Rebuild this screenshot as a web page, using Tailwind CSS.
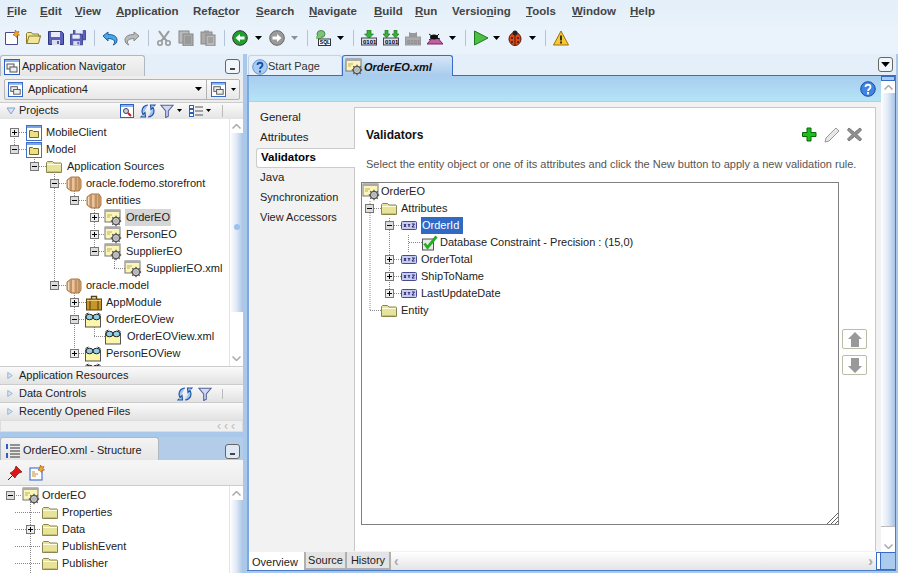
<!DOCTYPE html>
<html>
<head>
<meta charset="utf-8">
<script src="https://cdn.jsdelivr.net/npm/@tailwindcss/browser@4"></script>
<title>OrderEO.xml</title>
</head>
<body class="m-0 overflow-hidden">
<svg width="0" height="0" class="absolute">
  <defs>
    <symbol id="plus" viewBox="0 0 9 9"><rect x=".5" y=".5" width="8" height="8" fill="#eee" stroke="#777"/><path d="M2 4.500h5M4.500 2v5" stroke="#000"/></symbol>
    <symbol id="minus" viewBox="0 0 9 9"><rect x=".5" y=".5" width="8" height="8" fill="#ddd" stroke="#777"/><path d="M2 4.500h5" stroke="#000"/></symbol>
    <symbol id="folder" viewBox="0 0 16 16"><path d="M.5 13.500v-10l1-1h5l1.500 1.500h7l.5.5v9z" fill="#e8e39a" stroke="#8a8650"/><path d="M1 5.500h14" stroke="#fffde0"/><path d="M1.500 12.500h13" stroke="#c8c070"/></symbol>
    <symbol id="app" viewBox="0 0 16 16"><rect x=".5" y=".5" width="15" height="15" fill="#fff" stroke="#3f6fc6"/><rect x="1" y="1" width="14" height="2" fill="#7aa4e6"/><path d="M3.500 12.500v-7h3l1 1h5v6z" fill="#ecdf86" stroke="#6f6a2a"/></symbol>
    <symbol id="pkg" viewBox="0 0 16 16"><path d="M1 4l4-3h8l2 3v8l-2 3H5l-4-3z" fill="#dcae80" stroke="#a87848"/><path d="M5 2v13M10 1.500v13.500M13 2v13" stroke="#a87848"/><path d="M2.500 4v8M7 2v12" stroke="#f4dcc0"/></symbol>
    <symbol id="gear" viewBox="0 0 18 18"><rect x="1" y="1" width="15" height="12" fill="#fbf6b8" stroke="#777"/><path d="M1 1h15v2H1z" fill="#aaa"/><path d="M3 6h5M3 8h3" stroke="#bbb060"/><circle cx="12" cy="12" r="3.600" fill="#ccc" stroke="#555" stroke-width="1.300"/><circle cx="12" cy="12" r="1.200" fill="#fff" stroke="#666" stroke-width=".6"/><path d="M12 6.800v2M12 15.200v2M6.800 12h2M15.200 12h2M8.300 8.300l1.400 1.400M14.300 14.300l1.400 1.400M8.300 15.700l1.400-1.400M14.300 9.700l1.400-1.400" stroke="#555" stroke-width="1.300"/></symbol>
    <symbol id="view" viewBox="0 0 18 16"><rect x="1.500" y="4" width="15" height="11" fill="#fbf6a8" stroke="#555"/><path d="M1.500 2.500l3-1.500M16.500 2.500l-3-1.500" stroke="#333"/><ellipse cx="5.500" cy="5" rx="3.500" ry="2.800" fill="#8fd0e8" stroke="#222"/><ellipse cx="12.500" cy="5" rx="3.500" ry="2.800" fill="#8fd0e8" stroke="#222"/></symbol>
    <symbol id="brief" viewBox="0 0 16 16"><path d="M5.500 4V1.500h5V4" fill="none" stroke="#5a4310" stroke-width="1.400"/><rect x=".5" y="4" width="15" height="11" fill="#c6962a" stroke="#5a4310"/><path d="M4 4v11M12 4v11" stroke="#6d5214" stroke-width="1.300"/><path d="M1 5.500h14" stroke="#edcf70"/></symbol>
    <symbol id="xyz" viewBox="0 0 16 9"><rect x=".5" y=".5" width="15" height="8" rx="1" fill="#c8ccf0" stroke="#4a4a90"/><path d="M3 3l2 3M5 3L3 6M7 3l1 1.500 1-1.500M8 4.500V6M11 3h2.500L11 6h2.500" stroke="#22226a" fill="none"/></symbol>
    <symbol id="tri" viewBox="0 0 8 10"><path d="M1 1l6 4-6 4z" fill="#d6e4f6" stroke="#8aa4c8"/></symbol>
    <symbol id="sync" viewBox="0 0 16 16"><path d="M8 2A6 6 0 0 0 2 8c0 1.500.5 2.500 1 3.500l2-2L5.500 14H1l1-1" fill="#9cc4f0" stroke="#2457a8" stroke-width="1.200"/><path d="M8 14a6 6 0 0 0 6-6c0-1.500-.5-2.500-1-3.500l-2 2L10.500 2H15l-1 1" fill="#9cc4f0" stroke="#2457a8" stroke-width="1.200"/></symbol>
    <symbol id="funnel" viewBox="0 0 16 16"><path d="M1 1.500h14L9.500 8v6l-3 1.500V8z" fill="#d4d8f0" stroke="#50609a" stroke-width="1.200"/></symbol>
    <symbol id="drop" viewBox="0 0 7 4"><path d="M0 0h7L3.500 4z" fill="#000"/></symbol>
    <symbol id="disk" viewBox="0 0 16 16"><path d="M.5 1.500h13l2 2v11H.5z" fill="#5b61b8" stroke="#2f3480"/><rect x="3" y="2" width="9" height="5" fill="#e8eaf8"/><rect x="4" y="10" width="8" height="5" fill="#dcdcf0"/><rect x="9" y="11" width="2" height="3" fill="#5b61b8"/></symbol>
    <symbol id="win" viewBox="0 0 16 16"><rect x=".5" y=".5" width="15" height="15" fill="#fff" stroke="#2c5fc4"/><rect x="1" y="1" width="14" height="2" fill="#8ab2ee"/><rect x="3" y="5" width="7" height="5" fill="#eee" stroke="#555"/><rect x="6" y="8" width="7" height="5" fill="#eee" stroke="#555"/></symbol>
  </defs>
</svg>

<div class="w-[898px] h-[573px] overflow-hidden flex flex-col bg-[#a9c8ea] text-[11px] text-[#222] font-['Liberation_Sans',sans-serif]">

  <!-- menu -->
  <div class="h-[26px] shrink-0 flex items-center bg-linear-to-b from-[#e3eff9] to-[#e8f2fb] font-bold text-[11.500px] text-[#444] pb-[2px]">
    <span class="ml-[7px] w-[33px]"><span class="underline">F</span>ile</span>
    <span class="w-[35px]"><span class="underline">E</span>dit</span>
    <span class="w-[41px]"><span class="underline">V</span>iew</span>
    <span class="w-[77px]"><span class="underline">A</span>pplication</span>
    <span class="w-[63px]">Refa<span class="underline">c</span>tor</span>
    <span class="w-[53px]"><span class="underline">S</span>earch</span>
    <span class="w-[65px]"><span class="underline">N</span>avigate</span>
    <span class="w-[41px]"><span class="underline">B</span>uild</span>
    <span class="w-[37px]"><span class="underline">R</span>un</span>
    <span class="w-[74px]">Versio<span class="underline">n</span>ing</span>
    <span class="w-[46px]"><span class="underline">T</span>ools</span>
    <span class="w-[58px]"><span class="underline">W</span>indow</span>
    <span><span class="underline">H</span>elp</span>
  </div>

  <!-- toolbar -->
  <div class="h-[28px] shrink-0 flex items-center bg-[#eaf3fb] pb-[4px]">
    <svg class="ml-[4px] w-4 h-4" viewBox="0 0 16 16"><path d="M1.500 2.500h9l3 3v9h-12z" fill="#fff" stroke="#4a4a8a"/><path d="M11.500 0l1 2 2.500-.5-1 2 1.500 1.500-2.500.5-.5 2-1.500-2-2-.5 1.500-1.500z" fill="#e8b020" stroke="#b04010" stroke-width=".6"/></svg>
    <svg class="ml-[6px] w-4 h-4" viewBox="0 0 16 16"><path d="M.5 13.500v-10l1-1h4l1 1.500h6v2h2l-2 7.500z" fill="#f2e69a" stroke="#8c7c30"/><path d="M.8 13.500L3 6h12" fill="none" stroke="#8c7c30"/></svg>
    <svg class="ml-[6px] w-4 h-4"><use href="#disk"/></svg>
    <svg class="ml-[6px] w-4 h-4" viewBox="0 0 16 16"><use href="#disk" x="3" y="-2" width="13" height="13"/><use href="#disk" x="0" y="3" width="13" height="13"/></svg>
    <span class="ml-[8px] w-px h-[16px] bg-[#b4c4d4]"></span>
    <svg class="ml-[7px] w-4 h-4" viewBox="0 0 16 16"><path d="M1 6l5-4v2.500c5 0 9 1.500 9 5.500 0 3-2 4.500-4 5 1-1 2-2.500 1.500-4C12 9.500 9 8.500 6 8.500V11z" fill="#4aa6e6" stroke="#1d5c9c"/></svg>
    <svg class="ml-[6px] w-4 h-4" viewBox="0 0 16 16"><path d="M15 6l-5-4v2.500c-5 0-9 1.500-9 5.500 0 3 2 4.500 4 5-1-1-2-2.500-1.500-4C4 9.500 7 8.500 10 8.500V11z" fill="#b8bcbc" stroke="#888"/></svg>
    <span class="ml-[8px] w-px h-[16px] bg-[#b4c4d4]"></span>
    <svg class="ml-[7px] w-4 h-4" viewBox="0 0 16 16"><path d="M3 1l5 7 5-7M8 8l-3 3M8 8l3 3" fill="none" stroke="#999" stroke-width="2"/><circle cx="4" cy="13" r="2.200" fill="none" stroke="#999" stroke-width="1.600"/><circle cx="12" cy="13" r="2.200" fill="none" stroke="#999" stroke-width="1.600"/></svg>
    <svg class="ml-[6px] w-4 h-4" viewBox="0 0 16 16"><rect x="1" y="1" width="10" height="12" fill="#bbb" stroke="#888"/><rect x="5" y="4" width="10" height="12" fill="#aaa" stroke="#888"/><path d="M7 7h6M7 9h6M7 11h6M7 13h6" stroke="#888"/></svg>
    <svg class="ml-[6px] w-4 h-4" viewBox="0 0 16 16"><rect x="1" y="2" width="11" height="12" fill="#aaa" stroke="#888"/><rect x="4" y="0.500" width="5" height="3" fill="#999"/><rect x="6" y="5" width="9" height="11" fill="#b8b8b8" stroke="#888"/><path d="M8 8h5M8 10h5M8 12h5" stroke="#888"/></svg>
    <span class="ml-[8px] w-px h-[16px] bg-[#b4c4d4]"></span>
    <svg class="ml-[7px] w-4 h-4" viewBox="0 0 16 16"><circle cx="8" cy="8" r="7.300" fill="#1fa02c" stroke="#333"/><path d="M3.500 8L8 4v2.500h4.500v3H8V12z" fill="#fff"/></svg>
    <svg class="ml-[7px] w-[7px] h-1"><use href="#drop"/></svg>
    <svg class="ml-[7px] w-4 h-4" viewBox="0 0 16 16"><circle cx="8" cy="8" r="7.300" fill="#9a9a9a" stroke="#666"/><path d="M12.500 8L8 4v2.500H3.500v3H8V12z" fill="#fff"/></svg>
    <svg class="ml-[6px] w-[7px] h-1 opacity-40"><use href="#drop"/></svg>
    <span class="ml-[9px] w-px h-[16px] bg-[#b4c4d4]"></span>
    <svg class="ml-[7px] w-4 h-4" viewBox="0 0 16 16"><ellipse cx="6" cy="4" rx="4" ry="3.500" fill="#7cc47c" stroke="#4a8a4a"/><rect x="1" y="6" width="5" height="3" fill="#7cc47c"/><rect x="3.500" y="9" width="12" height="6.500" fill="#fff" stroke="#333"/><text x="4.800" y="14.300" font-size="5" font-weight="bold" font-family="Liberation Sans">SQL</text></svg>
    <svg class="ml-[6px] w-[7px] h-1"><use href="#drop"/></svg>
    <span class="ml-[9px] w-px h-[16px] bg-[#b4c4d4]"></span>
    <svg class="ml-[7px] w-4 h-4" viewBox="0 0 16 16"><path d="M6 0h4v4h2.500L8 8.500 3.500 4H6z" fill="#38b038" stroke="#1a6a1a" stroke-width=".6"/><rect x=".5" y="8" width="15" height="7" fill="#dde" stroke="#445"/><text x="2" y="14" font-size="6" font-weight="bold" font-family="Liberation Sans">0101</text></svg>
    <svg class="ml-[6px] w-4 h-4" viewBox="0 0 16 16"><path d="M2 0h3v4h2L3.500 8 0 4h2zM11 0h3v4h2l-3.500 4L9 4h2z" fill="#38b038" stroke="#1a6a1a" stroke-width=".6"/><rect x=".5" y="8" width="15" height="7" fill="#dde" stroke="#445"/><text x="2" y="14" font-size="6" font-weight="bold" font-family="Liberation Sans">0101</text></svg>
    <svg class="ml-[6px] w-4 h-4" viewBox="0 0 16 16"><path d="M4 7V2l2 1h4l2-1v5z" fill="#999"/><rect x=".5" y="7" width="15" height="8" fill="#aaa" stroke="#999"/><text x="2" y="14" font-size="6" font-weight="bold" fill="#888" font-family="Liberation Sans">0101</text></svg>
    <svg class="ml-[6px] w-4 h-4" viewBox="0 0 16 16"><path d="M0 14L8 5l8 9z" fill="#c060a0" stroke="#802060"/><ellipse cx="7" cy="7" rx="4" ry="2.500" fill="#111"/><path d="M2 4l3 2M2 10l3-2M12 4l-2 2M13 9l-3-1" stroke="#111"/></svg>
    <svg class="ml-[6px] w-[7px] h-1"><use href="#drop"/></svg>
    <span class="ml-[9px] w-px h-[16px] bg-[#b4c4d4]"></span>
    <svg class="ml-[7px] w-4 h-4" viewBox="0 0 16 16"><path d="M1.500 1v14L15 8z" fill="#4cc040" stroke="#1a7a1a"/></svg>
    <svg class="ml-[4px] w-[7px] h-1"><use href="#drop"/></svg>
    <svg class="ml-[7px] w-4 h-4" viewBox="0 0 16 16"><ellipse cx="8" cy="9" rx="6" ry="6.500" fill="#e04818" stroke="#501808"/><circle cx="8" cy="3" r="2.500" fill="#222"/><path d="M8 3v12" stroke="#501808"/><circle cx="5" cy="8" r="1" fill="#222"/><circle cx="11" cy="8" r="1" fill="#222"/><circle cx="5" cy="12" r="1" fill="#222"/><circle cx="11" cy="12" r="1" fill="#222"/></svg>
    <svg class="ml-[6px] w-[7px] h-1"><use href="#drop"/></svg>
    <span class="ml-[9px] w-px h-[16px] bg-[#b4c4d4]"></span>
    <svg class="ml-[7px] w-4 h-4" viewBox="0 0 16 16"><path d="M8 1L15.500 15H.5z" fill="#f8c830" stroke="#a07010"/><path d="M8 5.500V10.500M8 11.500v2" stroke="#222" stroke-width="1.800"/></svg>
  </div>

  <div class="flex-1 flex min-h-0">
    <!-- left column -->
    <div class="w-[244px] shrink-0 flex flex-col">

      <!-- navigator -->
      <div class="h-[378px] shrink-0 flex flex-col bg-white mr-[1px]">
        <div class="h-[22px] shrink-0 flex items-end bg-[#e4eff9] relative">
          <div class="w-[145px] h-[21px] pt-[1px] flex items-center bg-linear-to-b from-[#f4f4f4] to-[#e6e6e6] border border-b-0 border-[#b0b8c0] rounded-t-[3px] text-[#222]">
            <svg class="ml-[3px] w-[16px] h-[16px]"><use href="#win"/></svg>
            <span class="ml-[2px]">Application Navigator</span>
          </div>
          <div class="ml-auto mr-[3px] mb-[2px] w-[15px] h-[15px] border border-[#666] rounded-[3px] bg-[#f2f6fa] flex items-end justify-center pb-[3px]"><span class="w-[5px] h-[2px] bg-[#444]"></span></div>
        </div>
        <div class="h-[26px] shrink-0 flex items-center bg-[#eeeeee] pl-[4px]">
          <div class="w-[236px] h-[21px] flex items-center bg-linear-to-b from-[#fbfbfb] to-[#e8e8e8] border border-[#b4b4b4] rounded-[2px]">
            <svg class="ml-[3px] w-[15px] h-[15px]"><use href="#win"/></svg>
            <span class="ml-[5px] pt-[1px]">Application4</span>
            <svg class="ml-auto w-[7px] h-1 mr-[4px]"><use href="#drop"/></svg>
            <span class="w-px h-[19px] bg-[#b4b4b4]"></span>
            <svg class="ml-[4px] w-[15px] h-[15px]"><use href="#win"/></svg>
            <svg class="ml-[5px] mr-[3px] w-[5px] h-[3px]"><use href="#drop"/></svg>
          </div>
        </div>
        <div class="h-[17px] shrink-0 flex items-center bg-linear-to-b from-[#fafafa] to-[#e4e4e4] border-t border-[#ccc] pb-[1px]">
          <svg class="ml-[6px] w-[10px] h-[8px]" viewBox="0 0 10 8"><path d="M1 1h8L5 7z" fill="#d6e4f6" stroke="#8aa4c8"/></svg>
          <span class="ml-[3px] w-[42px]">Projects</span>
          <svg class="ml-[59px] w-[14px] h-[14px]" viewBox="0 0 14 14"><rect x=".5" y=".5" width="13" height="13" fill="#fff" stroke="#2c5fc4"/><rect x="1" y="1" width="12" height="2" fill="#8ab2ee"/><circle cx="6" cy="7" r="2.500" fill="#cce" stroke="#444"/><path d="M8 9l3 3" stroke="#c02020" stroke-width="2"/></svg>
          <svg class="ml-[6px] w-4 h-4"><use href="#sync"/></svg>
          <svg class="ml-[4px] w-[14px] h-[14px]"><use href="#funnel"/></svg>
          <svg class="ml-[3px] w-[5px] h-[3px]"><use href="#drop"/></svg>
          <svg class="ml-[7px] w-[14px] h-[12px]" viewBox="0 0 14 12"><rect x=".5" y=".5" width="4" height="3" fill="#fff" stroke="#2c5fc4"/><rect x=".5" y="4.500" width="4" height="3" fill="#fff" stroke="#2c5fc4"/><rect x=".5" y="8.500" width="4" height="3" fill="#fff" stroke="#2c5fc4"/><path d="M6 2h8M6 6h8M6 10h8" stroke="#555"/></svg>
          <svg class="ml-[3px] w-[5px] h-[3px]"><use href="#drop"/></svg>
          <span class="ml-[11px] w-px h-[12px] bg-[#bbb]"></span>
        </div>

        <div class="h-[247px] shrink-0 flex">
          <div class="relative flex-1 pt-[5px] overflow-hidden ml-[2px]">
            <svg class="absolute left-0 top-0 w-[227px] h-[247px]" fill="none" stroke="#888" stroke-dasharray="1 1">
              <path d="M12.500 13v17M32.500 30v17M52.500 47v119M72.500 64v17M92.500 81v51M112.500 132v17M72.500 166v68M92.500 200v17"/>
              <path d="M17 13.500h8M17 30.500h8M37 47.500h8M57 64.500h8M77 81.500h8M97 98.500h8M97 115.500h8M97 132.500h8M112 149.500h13M57 166.500h8M77 183.500h8M77 200.500h8M92 217.500h13M77 234.500h8"/>
            </svg>
            <div class="relative">
              <div class="flex items-center h-[17px] pl-[8px]"><svg class="w-[9px] h-[9px]"><use href="#plus"/></svg><svg class="ml-[7px] w-4 h-4"><use href="#app"/></svg><span class="ml-1">MobileClient</span></div>
              <div class="flex items-center h-[17px] pl-[8px]"><svg class="w-[9px] h-[9px]"><use href="#minus"/></svg><svg class="ml-[7px] w-4 h-4"><use href="#app"/></svg><span class="ml-1">Model</span></div>
              <div class="flex items-center h-[17px] pl-[28px]"><svg class="w-[9px] h-[9px]"><use href="#minus"/></svg><svg class="ml-[7px] w-4 h-4"><use href="#folder"/></svg><span class="ml-[5px]">Application Sources</span></div>
              <div class="flex items-center h-[17px] pl-[48px]"><svg class="w-[9px] h-[9px]"><use href="#minus"/></svg><svg class="ml-[7px] w-4 h-4"><use href="#pkg"/></svg><span class="ml-1">oracle.fodemo.storefront</span></div>
              <div class="flex items-center h-[17px] pl-[68px]"><svg class="w-[9px] h-[9px]"><use href="#minus"/></svg><svg class="ml-[7px] w-4 h-4"><use href="#pkg"/></svg><span class="ml-1">entities</span></div>
              <div class="flex items-center h-[17px] pl-[88px]"><svg class="w-[9px] h-[9px]"><use href="#plus"/></svg><svg class="ml-[5px] w-[18px] h-[18px]"><use href="#gear"/></svg><span class="ml-[3px] px-[1px] bg-[#d6d6d6]">OrderEO</span></div>
              <div class="flex items-center h-[17px] pl-[88px]"><svg class="w-[9px] h-[9px]"><use href="#plus"/></svg><svg class="ml-[5px] w-[18px] h-[18px]"><use href="#gear"/></svg><span class="ml-1">PersonEO</span></div>
              <div class="flex items-center h-[17px] pl-[88px]"><svg class="w-[9px] h-[9px]"><use href="#minus"/></svg><svg class="ml-[5px] w-[18px] h-[18px]"><use href="#gear"/></svg><span class="ml-1">SupplierEO</span></div>
              <div class="flex items-center h-[17px] pl-[108px]"><span class="w-[9px]"></span><svg class="ml-[5px] w-[18px] h-[18px]"><use href="#gear"/></svg><span class="ml-1">SupplierEO.xml</span></div>
              <div class="flex items-center h-[17px] pl-[48px]"><svg class="w-[9px] h-[9px]"><use href="#minus"/></svg><svg class="ml-[7px] w-4 h-4"><use href="#pkg"/></svg><span class="ml-1">oracle.model</span></div>
              <div class="flex items-center h-[17px] pl-[68px]"><svg class="w-[9px] h-[9px]"><use href="#plus"/></svg><svg class="ml-[7px] w-4 h-4"><use href="#brief"/></svg><span class="ml-1">AppModule</span></div>
              <div class="flex items-center h-[17px] pl-[68px]"><svg class="w-[9px] h-[9px]"><use href="#minus"/></svg><svg class="ml-[5px] w-[18px] h-4"><use href="#view"/></svg><span class="ml-1">OrderEOView</span></div>
              <div class="flex items-center h-[17px] pl-[88px]"><span class="w-[9px]"></span><svg class="ml-[5px] w-[18px] h-4"><use href="#view"/></svg><span class="ml-[5px]">OrderEOView.xml</span></div>
              <div class="flex items-center h-[17px] pl-[68px]"><svg class="w-[9px] h-[9px]"><use href="#plus"/></svg><svg class="ml-[5px] w-[18px] h-4"><use href="#view"/></svg><span class="ml-1">PersonEOView</span></div>
              <div class="flex items-center h-[17px] pl-[68px]"><span class="w-[9px]"></span><svg class="ml-[5px] w-[18px] h-4"><use href="#view"/></svg></div>
            </div>
          </div>
          <!-- navigator scrollbar -->
          <div class="w-[14px] shrink-0 flex flex-col bg-white border-l border-[#e4e4e4]">
            <div class="h-[14px] flex items-center justify-center"><svg class="w-[9px] h-[5px]" viewBox="0 0 9 5"><path d="M.5 4.500l4-4 4 4" fill="none" stroke="#aaa" stroke-width="1.500"/></svg></div>
            <div class="h-[179px] bg-linear-to-r from-white via-[#dfe9f6] to-[#a9c4e6] flex items-center justify-center pt-[8px]"><span class="w-[6px] h-[6px] rounded-full bg-[#9cc0f0]"></span></div>
            <div class="flex-1 flex items-end justify-center pb-[5px]"><svg class="w-[9px] h-[5px]" viewBox="0 0 9 5"><path d="M.5.500l4 4 4-4" fill="none" stroke="#aaa" stroke-width="1.500"/></svg></div>
          </div>
        </div>

        <div class="h-[18px] shrink-0 flex items-center bg-linear-to-b from-[#fafafa] to-[#e2e2e2] border-t border-[#ccc] pb-[1px]">
          <svg class="ml-[7px] w-[6px] h-[9px]"><use href="#tri"/></svg><span class="ml-[6px]">Application Resources</span>
        </div>
        <div class="h-[18px] shrink-0 flex items-center bg-linear-to-b from-[#fafafa] to-[#e2e2e2] border-t border-[#ccc]">
          <svg class="ml-[7px] w-[6px] h-[9px]"><use href="#tri"/></svg><span class="ml-[6px]">Data Controls</span>
          <svg class="ml-auto w-4 h-4"><use href="#sync"/></svg>
          <svg class="ml-[5px] w-[14px] h-[14px]"><use href="#funnel"/></svg>
          <span class="ml-[10px] mr-[20px] w-px h-[10px] bg-[#bbb]"></span>
        </div>
        <div class="h-[18px] shrink-0 flex items-center bg-linear-to-b from-[#fafafa] to-[#e2e2e2] border-t border-[#ccc]">
          <svg class="ml-[7px] w-[6px] h-[9px]"><use href="#tri"/></svg><span class="ml-[6px]">Recently Opened Files</span>
        </div>
        <div class="h-[12px] shrink-0 flex items-center justify-end bg-[#f0f0f0] border border-[#ddd] pr-[4px] text-[#bbb] text-[12px] leading-none tracking-[3px]">‹‹‹</div>
      </div>

      <!-- structure -->
      <div class="mt-[5px] flex-1 min-h-0 flex flex-col bg-white mr-[1px]">
        <div class="h-[23px] shrink-0 flex items-end bg-[#b3cde9] relative">
          <div class="w-[159px] h-[23px] pt-[3px] flex items-center bg-linear-to-b from-[#f4f4f4] to-[#e6e6e6] border border-b-0 border-[#b0b8c0] rounded-t-[3px]">
            <svg class="ml-[4px] w-[16px] h-[16px]" viewBox="0 0 16 16"><path d="M5 2h10M5 5h10M5 8h10M5 11h10M5 14h10" stroke="#333"/><path d="M2 1v5M2 10v5" stroke="#2c5fc4" stroke-width="2"/></svg>
            <span class="ml-[2px]">OrderEO.xml - Structure</span>
          </div>
          <div class="ml-auto mr-[3px] mb-[1px] w-[15px] h-[15px] border border-[#666] rounded-[3px] bg-[#dfe9f4] flex items-end justify-center pb-[3px]"><span class="w-[5px] h-[2px] bg-[#444]"></span></div>
        </div>
        <div class="h-[26px] shrink-0 flex items-center bg-linear-to-b from-[#f6f6f6] to-[#ececec] border-b border-[#ccc]">
          <svg class="ml-[7px] w-4 h-4" viewBox="0 0 16 16"><path d="M1 15l5-5" stroke="#222"/><path d="M9 1l6 6-3 1-3 3-1 2-5-5 2-1 3-3z" fill="#d81818" stroke="#801010" stroke-width=".7"/></svg>
          <svg class="ml-[6px] w-4 h-4" viewBox="0 0 16 16"><rect x="1" y="3" width="12" height="12" fill="#fff" stroke="#2c5fc4"/><path d="M3 7h3M3 9h6M3 11h4" stroke="#c09030"/><path d="M11.500 0l1 2 2.500-.5-1 2 1.500 1.500-2.500.5-.5 2-1.500-2-2-.5 1.500-1.500z" fill="#e8b020" stroke="#b04010" stroke-width=".6"/></svg>
        </div>
        <div class="flex-1 min-h-0 flex">
          <div class="relative flex-1 overflow-hidden ml-[2px]">
            <svg class="absolute left-0 top-0 w-[227px] h-[87px]" fill="none" stroke="#888" stroke-dasharray="1 1">
              <path d="M8 9.500h12M28.500 18v70M13 26.500h26M13 43.500h26M13 60.500h26M13 77.500h26M33 43.500h6"/>
            </svg>
            <div class="relative pt-[1px]">
              <div class="flex items-center h-[17px] pl-[4px]"><svg class="w-[9px] h-[9px]"><use href="#minus"/></svg><svg class="ml-[7px] w-[18px] h-[18px]"><use href="#gear"/></svg><span class="ml-[2px]">OrderEO</span></div>
              <div class="flex items-center h-[17px] pl-[24px]"><span class="w-[9px]"></span><svg class="ml-[7px] w-4 h-4"><use href="#folder"/></svg><span class="ml-1">Properties</span></div>
              <div class="flex items-center h-[17px] pl-[24px]"><svg class="w-[9px] h-[9px]"><use href="#plus"/></svg><svg class="ml-[7px] w-4 h-4"><use href="#folder"/></svg><span class="ml-1">Data</span></div>
              <div class="flex items-center h-[17px] pl-[24px]"><span class="w-[9px]"></span><svg class="ml-[7px] w-4 h-4"><use href="#folder"/></svg><span class="ml-1">PublishEvent</span></div>
              <div class="flex items-center h-[17px] pl-[24px]"><span class="w-[9px]"></span><svg class="ml-[7px] w-4 h-4"><use href="#folder"/></svg><span class="ml-1">Publisher</span></div>
            </div>
          </div>
          <div class="w-[14px] shrink-0 flex flex-col bg-white border-l border-[#e4e4e4]">
            <div class="h-[14px] flex items-center justify-center"><svg class="w-[9px] h-[5px]" viewBox="0 0 9 5"><path d="M.5 4.500l4-4 4 4" fill="none" stroke="#aaa" stroke-width="1.500"/></svg></div>
            <div class="flex-1 bg-linear-to-r from-white via-[#dfe9f6] to-[#a9c4e6]"></div>
          </div>
        </div>
      </div>
    </div>

    <!-- editor -->
    <div class="ml-[3px] mr-[2px] flex-1 min-w-0 flex flex-col">
      <div class="h-[22px] shrink-0 flex items-end bg-[#e4eff9] border-b border-[#3a6cc6]">
        <div class="ml-[1px] w-[94px] h-[20px] pt-[2px] flex items-center bg-[#e8f1fa] border border-b-0 border-[#c4d4e4] rounded-t-[3px]">
          <svg class="ml-[3px] w-4 h-4" viewBox="0 0 16 16"><circle cx="8" cy="8" r="7.300" fill="#a8ccf4" stroke="#6a94cc"/><path d="M5.500 6c0-3 5-3 5 0 0 2-2.500 2-2.500 4M8 11.500v2" fill="none" stroke="#1a4ea0" stroke-width="1.800"/></svg>
          <span class="text-[#333]">Start Page</span>
        </div>
        <div class="-mb-px w-[111px] h-[21px] pt-[2px] flex items-center bg-linear-to-b from-[#d6e6f6] to-[#a8cbee] border border-b-0 border-[#3a6cc6] rounded-t-[3px]">
          <svg class="ml-[2px] w-[18px] h-[18px]"><use href="#gear"/></svg>
          <span class="ml-[1px] font-bold italic text-[#111]">OrderEO.xml</span>
        </div>
        <div class="ml-auto mr-[3px] mb-[3px] w-[15px] h-[15px] border border-[#666] rounded-[3px] bg-[#f2f6fa] flex items-center justify-center"><svg class="w-[9px] h-[5px]"><use href="#drop"/></svg></div>
      </div>
      <div class="flex-1 min-h-0 flex border-l-2 border-l-[#7ea9e0] border-r border-r-[#4a7cc8]">
        <div class="flex-1 min-w-0 flex flex-col">
          <div class="h-[26px] shrink-0 flex items-center justify-end bg-linear-to-b from-[#a8cdef] to-[#b5e4f6] border-b border-[#c8c8c8] pr-[5px]">
            <svg class="w-4 h-4" viewBox="0 0 16 16"><circle cx="8" cy="8" r="7.300" fill="#3d84e6" stroke="#1a4ea0"/><path d="M5.500 6c0-3 5-3 5 0 0 2-2.500 2-2.500 4M8 11v2.500" fill="none" stroke="#fff" stroke-width="1.800"/></svg>
          </div>
          <div class="flex-1 min-h-0 flex bg-[#f2f2f2] pt-[5px]">
            <div class="w-[105px] shrink-0 pt-[1px] text-[11.500px] text-[#222]">
              <div class="h-[20px] flex items-center pl-[11px]">General</div>
              <div class="h-[20px] flex items-center pl-[11px]">Attributes</div>
              <div class="h-[20px] -mr-px relative flex items-center ml-[7px] pl-[4px] font-bold text-black bg-white border border-r-0 border-[#ccc] rounded-l-[3px]">Validators</div>
              <div class="h-[20px] flex items-center pl-[11px]">Java</div>
              <div class="h-[20px] flex items-center pl-[11px] pb-[1px] text-[11px]">Synchronization</div>
              <div class="h-[20px] flex items-center pl-[11px] pb-[1px] text-[11px]">View Accessors</div>
            </div>
            <div class="flex-1 min-w-0 mr-[5px] mb-[1px] bg-white border border-[#c8c8c8] border-b-0 flex flex-col pl-[6px]">
              <div class="mt-[18px] mb-[12px] h-[17px] shrink-0 flex items-center pr-[13px]">
                <span class="ml-[5px] font-bold text-[#111] text-[12px]">Validators</span>
                <svg class="ml-auto w-[15px] h-[15px]" viewBox="0 0 15 15"><path d="M5 1h4v4.500h5v4H9V14H5V9.500H.5v-4H5z" fill="#18c018" stroke="#0a660a"/></svg>
                <svg class="ml-[7px] w-[16px] h-[16px]" viewBox="0 0 16 16"><path d="M1 15l1-4L12 1l3 3L5 14z" fill="#e8e8e8" stroke="#999"/></svg>
                <svg class="ml-[7px] w-[15px] h-[15px]" viewBox="0 0 15 15"><path d="M2 1l5.500 4.500L13 1l1.500 2L10 7.500l4.500 4.500-1.500 2-5.500-4.500L2 14 .5 12 5 7.500.5 3z" fill="#909090" stroke="#777"/></svg>
              </div>
              <div class="ml-[5px] h-[18px] flex items-center text-[11px] text-[#555] whitespace-nowrap">Select the entity object or one of its attributes and click the New button to apply a new validation rule.</div>
              <div class="flex mt-[9px]">
                <div class="relative w-[478px] h-[343px] border border-[#808080] text-[#222]">
                  <svg class="absolute left-0 top-0 w-[476px] h-[140px]" fill="none" stroke="#888" stroke-dasharray="1 1">
                    <path d="M8 18v110M27.500 35v78M46.500 52v17"/>
                    <path d="M8 127.500h12M12 25.500h8M32 42.500h8M47 59.500h13M32 76.500h8M32 93.500h8M32 110.500h8"/>
                  </svg>
                  <div class="relative">
                    <div class="flex items-center h-[17px]"><svg class="w-[18px] h-[18px]"><use href="#gear"/></svg><span class="ml-[1px]">OrderEO</span></div>
                    <div class="flex items-center h-[17px] pl-[3px]"><svg class="w-[9px] h-[9px]"><use href="#minus"/></svg><svg class="ml-[7px] w-4 h-4"><use href="#folder"/></svg><span class="ml-1">Attributes</span></div>
                    <div class="flex items-center h-[17px] pl-[23px]"><svg class="w-[9px] h-[9px]"><use href="#minus"/></svg><svg class="ml-[7px] w-4 h-[9px]"><use href="#xyz"/></svg><span class="ml-1 pl-[1px] pr-[4px] h-[17px] leading-[17px] bg-[#316ac5] text-white">OrderId</span></div>
                    <div class="flex items-center h-[17px] pl-[60px]"><svg class="w-4 h-4" viewBox="0 0 16 16"><rect x=".5" y="4" width="11" height="11" fill="#e8e8e8" stroke="#555"/><path d="M2.500 8.500l3 4L14.500 1.500" fill="none" stroke="#22b022" stroke-width="2.800"/></svg><span class="ml-[2px]">Database Constraint - Precision : (15,0)</span></div>
                    <div class="flex items-center h-[17px] pl-[23px]"><svg class="w-[9px] h-[9px]"><use href="#plus"/></svg><svg class="ml-[7px] w-4 h-[9px]"><use href="#xyz"/></svg><span class="ml-1">OrderTotal</span></div>
                    <div class="flex items-center h-[17px] pl-[23px]"><svg class="w-[9px] h-[9px]"><use href="#plus"/></svg><svg class="ml-[7px] w-4 h-[9px]"><use href="#xyz"/></svg><span class="ml-1">ShipToName</span></div>
                    <div class="flex items-center h-[17px] pl-[23px]"><svg class="w-[9px] h-[9px]"><use href="#plus"/></svg><svg class="ml-[7px] w-4 h-[9px]"><use href="#xyz"/></svg><span class="ml-1">LastUpdateDate</span></div>
                    <div class="flex items-center h-[17px] pl-[3px]"><span class="w-[9px]"></span><svg class="ml-[7px] w-4 h-4"><use href="#folder"/></svg><span class="ml-1">Entity</span></div>
                  </div>
                  <svg class="absolute right-0 bottom-0 w-[11px] h-[11px]" viewBox="0 0 11 11" stroke="#666"><path d="M0 11L11 0M4 11l7-7M8 11l3-3"/></svg>
                </div>
                <div class="ml-[3px] pt-[147px] flex flex-col gap-[6px]">
                  <div class="w-[25px] h-[20px] flex items-center justify-center border border-[#bcbca8] rounded-[2px]"><svg class="w-[14px] h-[15px]" viewBox="0 0 14 15"><path d="M7 0l7 7h-3v8H3V7H0z" fill="#999"/></svg></div>
                  <div class="w-[25px] h-[20px] flex items-center justify-center border border-[#bcbca8] rounded-[2px]"><svg class="w-[14px] h-[15px]" viewBox="0 0 14 15"><path d="M7 15l7-7h-3V0H3v8H0z" fill="#999"/></svg></div>
                </div>
              </div>
            </div>
          </div>
          <!-- bottom tabs -->
          <div class="h-[18px] shrink-0 flex bg-white text-[#222]">
            <div class="w-[55px] flex items-center pl-[3px] pt-[2px] bg-white">Overview</div>
            <div class="w-[43px] flex items-center justify-center pt-[1px] bg-[#e4e4e4] border-2 border-t-0 border-[#b0b0b0]">Source</div>
            <div class="w-[44px] flex items-center justify-center pt-[1px] bg-[#e4e4e4] border-2 border-t-0 border-l-0 border-[#b0b0b0]">History</div>
            <div class="flex-1 flex items-center justify-between px-[3px] bg-linear-to-b from-white to-[#e4e4e4] text-[#aaa] font-bold text-[14px] leading-none"><span>‹</span><span>›</span></div>
            <div class="w-[5px] border border-[#3a6cc6] bg-white"></div>
          </div>
        </div>
        <!-- main scrollbar -->
        <div class="w-[14px] shrink-0 flex flex-col bg-white">
          <div class="h-[5px] border border-[#3a6cc6] bg-[#a8cbee]"></div>
          <div class="h-[12px] flex items-center justify-center"><svg class="w-[9px] h-[5px]" viewBox="0 0 9 5"><path d="M.5 4.500l4-4 4 4" fill="none" stroke="#aaa" stroke-width="1.500"/></svg></div>
          <div class="h-[434px] bg-linear-to-r from-white via-[#dfe9f6] to-[#a9c4e6] border-b border-[#bbb]"></div>
          <div class="h-[25px] flex items-end justify-center pb-[3px]"><svg class="w-[9px] h-[5px]" viewBox="0 0 9 5"><path d="M.5.500l4 4 4-4" fill="none" stroke="#aaa" stroke-width="1.500"/></svg></div>
          <div class="flex-1 bg-[#a8cbee] border-y border-[#3a6cc6]"></div>
        </div>
      </div>
      <div class="h-[3px] shrink-0 border-t border-[#4a7cc8]"></div>
    </div>
  </div>
</div>
</body>
</html>
